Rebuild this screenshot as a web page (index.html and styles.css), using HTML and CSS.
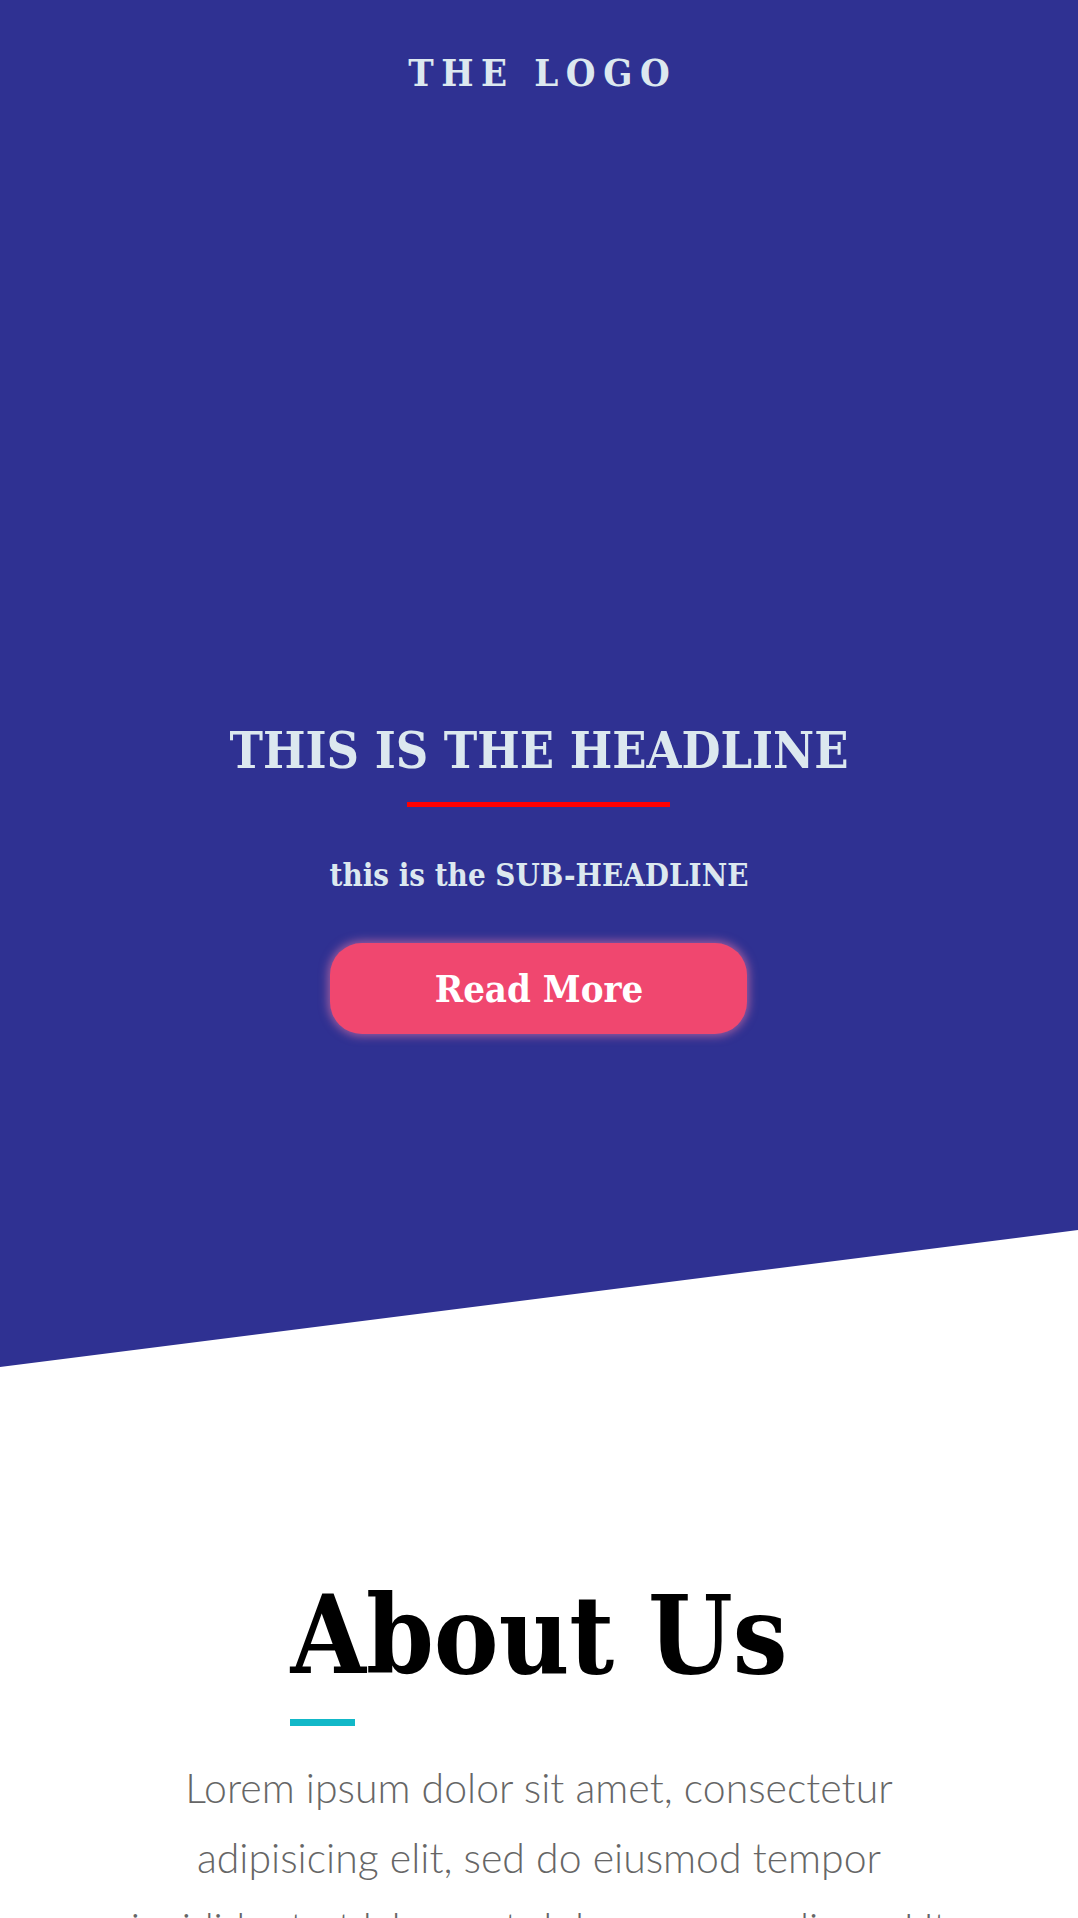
FILE: index.html
```html
<!DOCTYPE html>
<html lang="en">
<head>
<meta charset="utf-8">
<title>The Logo</title>
<link rel="stylesheet" href="styles.css">
</head>
<body>
<section class="hero">
  <div class="logo">THE LOGO</div>
  <div class="hero-content">
    <h1 class="headline">THIS IS THE HEADLINE</h1>
    <div class="headline-rule"></div>
    <p class="subheadline">this is the SUB-HEADLINE</p>
    <a class="btn" href="#">Read More</a>
  </div>
</section>
<section class="about">
  <h2 class="about-title">About Us</h2>
  <div class="about-rule"></div>
  <p class="about-text">Lorem ipsum dolor sit amet, consectetur adipisicing elit, sed do eiusmod tempor incididunt ut labore et dolore magna aliqua. Ut enim ad minim veniam, quis nostrud exercitation ullamco laboris nisi ut aliquip ex ea commodo consequat.</p>
</section>
</body>
</html>
```
FILE: styles.css
```css
html, body {
  margin: 0;
  padding: 0;
  background: #ffffff;
}
body {
  font-family: "DejaVu Serif Condensed", "DejaVu Serif", serif;
  overflow: hidden;
}
.hero {
  background: #2f3192;
  height: 1367px;
  clip-path: polygon(0 0, 100% 0, 100% 1230px, 0 1367px);
  display: flex;
  flex-direction: column;
  align-items: center;
  padding-top: 54px;
  box-sizing: border-box;
  color: #dce8ef;
}
.logo {
  font-size: 38px;
  line-height: 38px;
  font-weight: bold;
  letter-spacing: 0.2em;
  padding-left: 0.2em;
  font-stretch: condensed;
}
.hero-content {
  margin-top: 634px;
  display: flex;
  flex-direction: column;
  align-items: center;
}
.headline {
  margin: 0;
  font-size: 50px;
  line-height: 50px;
  font-weight: bold;
  font-stretch: condensed;
}
.headline-rule {
  width: 263px;
  height: 5px;
  background: #ff0000;
  margin-top: 26px;
}
.subheadline {
  margin: 53px 0 0;
  font-size: 31px;
  line-height: 31px;
  font-weight: bold;
  font-stretch: condensed;
}
.btn {
  margin-top: 52px;
  width: 417px;
  height: 91px;
  border-radius: 32px;
  background: #f0476f;
  color: #ffffff;
  text-decoration: none;
  display: flex;
  align-items: center;
  justify-content: center;
  font-size: 38px;
  font-weight: bold;
  box-shadow: 0 0 10px 2px rgba(255, 130, 170, 0.55);
  font-stretch: condensed;
}
.about {
  display: flex;
  flex-direction: column;
  align-items: center;
  margin-top: 214px;
}
.about-title {
  margin: 0;
  font-size: 108px;
  line-height: 108px;
  font-weight: bold;
  color: #000000;
  font-stretch: condensed;
}
.about-rule {
  align-self: flex-start;
  margin-left: 290px;
  width: 65px;
  height: 7px;
  background: #12b8c8;
  margin-top: 30px;
}
.about-text {
  margin: 27px 0 0;
  width: 866px;
  text-align: center;
  font-family: Lato, "Open Sans", sans-serif;
  font-weight: 300;
  font-size: 41px;
  line-height: 70px;
  color: #666666;
}
```
